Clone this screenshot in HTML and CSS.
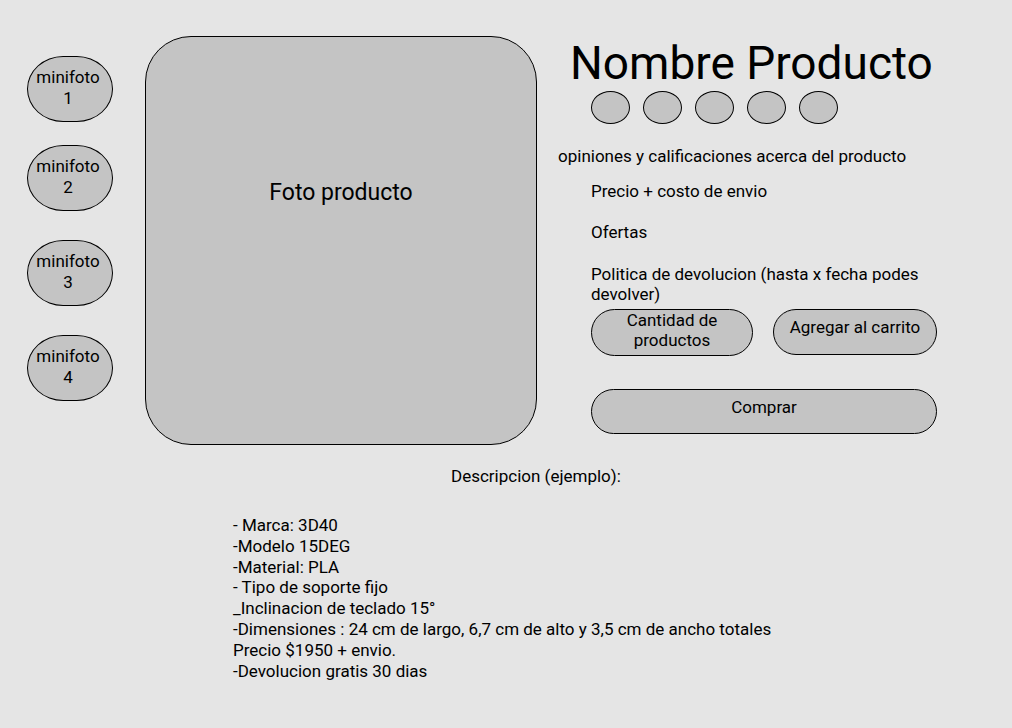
FILE: index.html
```html
<!DOCTYPE html>
<html lang="es">
<head>
    <meta charset="UTF-8">
    <meta name="viewport" content="width=device-width, initial-scale=1.0">
    <title>Nombre Producto</title>
    <link rel="stylesheet" href="styles.css">
</head>
<body>
    <div class="product">
        <!-- miniaturas -->
        <div class="thumbs">
            <div class="thumb">minifoto<br>1</div>
            <div class="thumb">minifoto<br>2</div>
            <div class="thumb">minifoto<br>3</div>
            <div class="thumb">minifoto<br>4</div>
        </div>
        <div class="photo">Foto producto</div>
        <div class="info">
            <h1>Nombre Producto</h1>
            <div class="stars">
                <span></span>
                <span></span>
                <span></span>
                <span></span>
                <span></span>
            </div>
            <p class="reviews">opiniones y calificaciones acerca del producto</p>
            <p class="line price">Precio + costo de envio</p>
            <p class="line offers">Ofertas</p>
            <p class="line policy">Politica de devolucion (hasta x fecha podes devolver)</p>
            <div class="actions">
                <button class="btn qty">Cantidad de productos</button>
                <button class="btn cart">Agregar al carrito</button>
            </div>
            <button class="btn buy">Comprar</button>
        </div>
    </div>
    <div class="description">
        <h2>Descripcion (ejemplo):</h2>
        <ul>
            <li>- Marca: 3D40</li>
            <li>-Modelo 15DEG</li>
            <li>-Material: PLA</li>
            <li>- Tipo de soporte fijo</li>
            <li>_Inclinacion de teclado 15°</li>
            <li>-Dimensiones : 24 cm de largo, 6,7 cm de alto y 3,5 cm de ancho totales</li>
            <li>Precio $1950 + envio.</li>
            <li>-Devolucion gratis 30 dias</li>
        </ul>
    </div>
</body>
</html>
```

FILE: styles.css
```css
body{
    margin: 0;
    background-color: #e5e5e5;
    font-family: Roboto, "Liberation Sans", sans-serif;
    font-size: 17px;
    line-height: 20px;
    color: #000;
}
.product{
    display: flex;
    align-items: flex-start;
    padding: 36px 0 0 27px;
}
.thumbs{
    display: flex;
    flex-direction: column;
    gap: 29px;
    margin-top: 20px;
}
.thumb{
    width: 86px;
    height: 66px;
    box-sizing: border-box;
    border: 1px solid #000;
    border-radius: 42% / 50%;
    background-color: #c4c4c4;
    display: flex;
    align-items: center;
    justify-content: center;
    text-align: center;
    padding: 0 4px 3px 0;
    line-height: 21px;
}
.thumb:nth-child(2){
    margin-top: -6px;
}
.photo{
    width: 392px;
    height: 409px;
    box-sizing: border-box;
    margin-left: 32px;
    border: 1px solid #000;
    border-radius: 46px;
    background-color: #c4c4c4;
    text-align: center;
    font-size: 23px;
    line-height: 26px;
    padding-top: 143px;
}
.info{
    margin-left: 21px;
    width: 390px;
}
h1{
    margin: 0 0 0 12px;
    font-size: 46px;
    line-height: 54px;
    font-weight: 400;
}
.stars{
    display: flex;
    gap: 13px;
    margin: 1px 0 0 33px;
}
.stars span{
    width: 39px;
    height: 33px;
    box-sizing: border-box;
    border: 1px solid #000;
    border-radius: 50%;
    background-color: #c4c4c4;
}
p{
    margin: 0;
}
.reviews{
    margin-top: 22px;
}
.line{
    margin-left: 33px;
    width: 350px;
}
.price{
    margin-top: 15px;
}
.offers{
    margin-top: 21px;
}
.policy{
    margin-top: 22px;
}
.actions{
    display: flex;
    gap: 20px;
    margin: 5px 0 0 33px;
}
.btn{
    font-family: inherit;
    font-size: 17px;
    line-height: 20px;
    color: #000;
    background-color: #c4c4c4;
    border: 1px solid #000;
    border-radius: 24px;
    box-sizing: border-box;
    padding: 0;
    display: block;
}
.qty{
    width: 162px;
    height: 47px;
    padding: 0 28px 6px;
}
.cart{
    width: 164px;
    height: 46px;
    padding-bottom: 11px;
}
.buy{
    width: 346px;
    height: 45px;
    margin: 33px 0 0 33px;
    padding-bottom: 9px;
}
.description{
    padding-left: 233px;
}
h2{
    margin: 21px 0 0 218px;
    font-size: 17px;
    line-height: 20px;
    font-weight: 400;
}
ul{
    list-style: none;
    margin: 29px 0 0;
    padding: 0;
    line-height: 20.8px;
}
```
